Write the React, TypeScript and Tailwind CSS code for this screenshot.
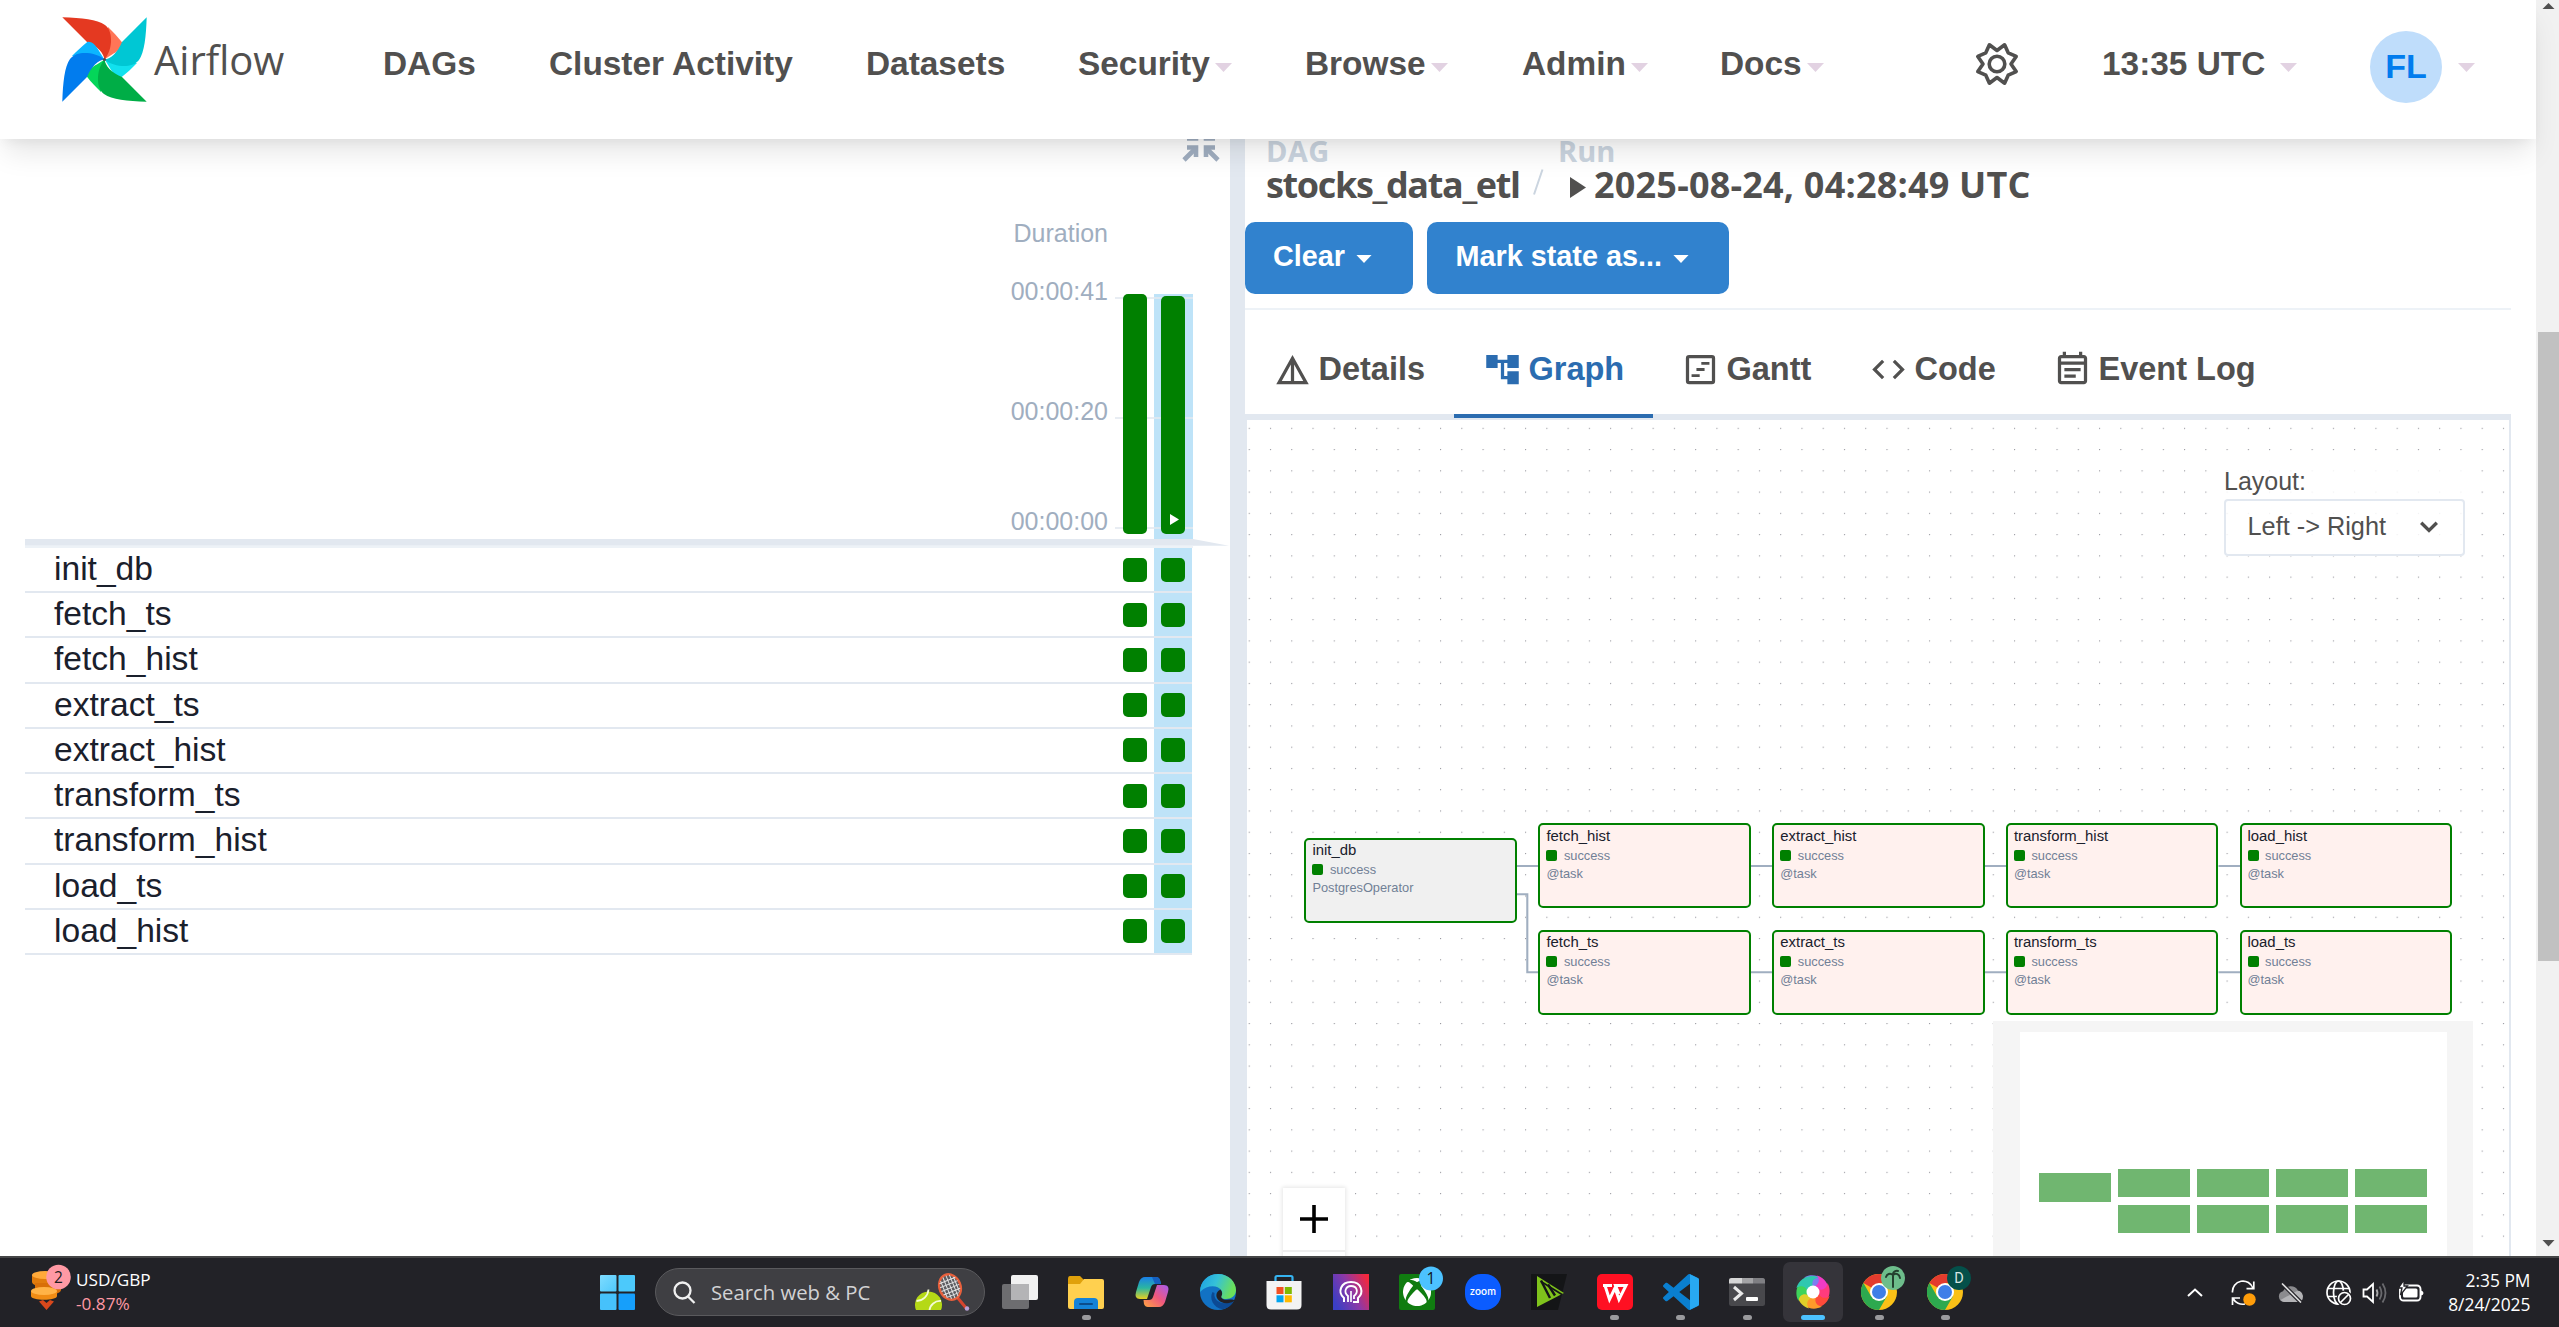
import React from "react";
import {
  MdAccountTree,
  MdCode,
  MdDetails,
  MdOutlineEventNote,
} from "react-icons/md";
import { FaXbox } from "react-icons/fa";

/* ---------- header ---------- */

const NAV_ITEMS = [
  { label: "DAGs", slot: "w-[166px]", caret: false },
  { label: "Cluster Activity", slot: "w-[317px]", caret: false },
  { label: "Datasets", slot: "w-[212px]", caret: false },
  { label: "Security", slot: "w-[227px]", caret: true },
  { label: "Browse", slot: "w-[217px]", caret: true },
  { label: "Admin", slot: "w-[198px]", caret: true },
  { label: "Docs", slot: "w-[255px]", caret: true },
];

function Caret({ className }: { className: string }) {
  return (
    <svg viewBox="0 0 17 9" className={className}>
      <path d="M0 0H17L8.5 9Z" fill="currentColor" />
    </svg>
  );
}

function PinwheelLogo() {
  const blades = [
    { angle: 0, main: "#e43921", light: "#ff7557" },
    { angle: 90, main: "#00c7d4", light: "#11e1ee" },
    { angle: 180, main: "#00ad46", light: "#04d659" },
    { angle: 270, main: "#017cee", light: "#0cb6ff" },
  ];
  return (
    <svg viewBox="0 0 85 85" className="size-[85px] shrink-0">
      {blades.map((b) => (
        <g key={b.angle} transform={`rotate(${b.angle} 42.5 42.5)`}>
          <path d="M46 10C51 15 56 20 60 25.3C61.5 33 50 37 42.5 42.5Z" fill={b.light} />
          <path d="M0.3 0.3C20 1 35 2.5 43 8C48 12 49.3 18 49 25C48.4 33 46 38 42.5 42.5C41.5 36 36 29.5 25 25Z" fill={b.main} />
        </g>
      ))}
      <circle cx="42.5" cy="42.5" r="1.6" fill="#51504f" />
    </svg>
  );
}

function GearIcon() {
  return (
    <svg viewBox="-22 -22 44 44" className="size-[44px]" fill="none" stroke="#51504f" strokeWidth="3.6" strokeLinejoin="round">
      <path d="M0 -13.5L7.6 -19.2L11.2 -11.2L19.2 -7.6L14 0L19.2 7.6L11.2 11.2L7.6 19.2L0 13.5L-7.6 19.2L-11.2 11.2L-19.2 7.6L-14 0L-19.2 -7.6L-11.2 -11.2L-7.6 -19.2Z" />
      <circle r="7.8" />
    </svg>
  );
}

function Header() {
  return (
    <header className="relative z-10 flex h-[139px] items-start bg-white shadow-[0_18px_27px_-5px_rgba(0,0,0,0.1),0_7px_11px_-4px_rgba(0,0,0,0.05)]">
      <div className="flex h-[119px] w-[383px] items-center pl-[61.5px]">
        <PinwheelLogo />
        <span className="ml-[7.5px] font-['Open_Sans',sans-serif] text-[40px] leading-[48px] text-[#51504f]">Airflow</span>
      </div>
      <nav className="flex h-[127px] items-center text-[33.4px] leading-[40px] font-bold text-[#51504f]">
        {NAV_ITEMS.map((item) => (
          <div key={item.label} className={`flex items-center ${item.slot}`}>
            {item.label}
            {item.caret && <Caret className="mt-[7px] ml-[5px] h-[9px] w-[17px] text-[#e2d2e2]" />}
          </div>
        ))}
        <div className="w-[127px]">
          <GearIcon />
        </div>
        <div className="flex w-[268px] items-center">
          13:35 UTC
          <Caret className="mt-[7px] ml-[15px] h-[9px] w-[17px] text-[#e2d2e2]" />
        </div>
      </nav>
      <div className="flex h-[134px] items-center">
        <div className="flex size-[72px] items-center justify-center rounded-full bg-[#bfddfb] pb-[3px] text-[34px] leading-[40px] font-bold text-[#017cee]">
          FL
        </div>
        <Caret className="mt-[1px] ml-[16px] h-[9px] w-[17px] text-[#e2d2e2]" />
      </div>
    </header>
  );
}

/* ---------- grid view ---------- */

const TASKS = [
  "init_db",
  "fetch_ts",
  "fetch_hist",
  "extract_ts",
  "extract_hist",
  "transform_ts",
  "transform_hist",
  "load_ts",
  "load_hist",
];

function CollapseIcon() {
  return (
    <svg viewBox="0 0 38 38" className="h-[38px] w-[38px]" fill="none" stroke="#a0aec0" strokeWidth="4.6">
      <path d="M5 14.5H14V5M5 23.5H14V33M33 14.5H24V5M33 23.5H24V33" />
      <path d="M2 36L13.5 24.5M36 36L24.5 24.5M2 2L13.5 13.5M36 2L24.5 13.5" />
    </svg>
  );
}

function DurationChart() {
  return (
    <div className="relative flex h-[400px] pl-[985px]">
      <div className="flex w-[98px] flex-col items-end pt-[79px] text-[25px] leading-[30px] text-[#a0aec0]">
        <span>Duration</span>
        <span className="mt-[28px]">00:00:41</span>
        <span className="mt-[90px]">00:00:20</span>
        <span className="mt-[80px]">00:00:00</span>
      </div>
      <div className="ml-[7px] flex w-[39px] pt-[155px] pl-[8px]">
        <div className="relative z-[1] h-[240px] w-[24px] rounded-[5px] bg-[#008000]" />
      </div>
      <div className="mt-[155px] flex w-[39px] bg-[#bee3f8] pt-[2px] pl-[7px]">
        <div className="relative z-[1] flex h-[238px] w-[24px] items-end justify-center rounded-[5px] bg-[#008000] pb-[9px]">
          <svg viewBox="0 0 9 11" className="ml-[3px] h-[11px] w-[9px]">
            <path d="M0 0L9 5.5L0 11Z" fill="#fff" />
          </svg>
        </div>
      </div>
      <div className="absolute top-[158px] left-[1090px] h-[2px] w-[78px] bg-[#e2e8f0]/80" />
      <div className="absolute top-[278px] left-[1090px] h-[2px] w-[78px] bg-[#e2e8f0]/80" />
      <div className="absolute top-[388px] left-[1090px] h-[2px] w-[78px] bg-[#e2e8f0]/80" />
      <div className="absolute top-[-15px] left-[1157px]">
        <CollapseIcon />
      </div>
    </div>
  );
}

function GridPanel() {
  return (
    <section className="w-[1230px] shrink-0 pl-[25px]">
      <DurationChart />
      <svg viewBox="0 0 1205 9" className="block h-[9px] w-[1205px]">
        <path d="M0 0H1168L1204 6.8H0Z" fill="#e2e8f0" />
        <path d="M0 6.8H1168V9H0Z" fill="#edf2f7" />
      </svg>
      <ul className="w-[1167px]">
        {TASKS.map((task) => (
          <li key={task} className="flex h-[45.22px] border-b-2 border-[#e2e8f0] text-[#1a202c]">
            <span className="w-[1090px] pl-[29px] text-[33.6px] leading-[42.6px]">{task}</span>
            <span className="flex w-[39px] items-center justify-center">
              <span className="size-[24px] rounded-[5px] bg-[#008000]" />
            </span>
            <span className="flex w-[38px] items-center justify-center bg-[#bee3f8]">
              <span className="size-[24px] rounded-[5px] bg-[#008000]" />
            </span>
          </li>
        ))}
      </ul>
    </section>
  );
}

/* ---------- details panel ---------- */

function Breadcrumb() {
  return (
    <div className="flex h-[83px] pl-[21px] font-['Open_Sans',sans-serif] font-bold text-[#51504f]">
      <div className="w-[266px]">
        <div className="mt-[-6px] h-[37px] text-[29px] leading-[36px] tracking-[0.4px] text-[#cbd5e0]">DAG</div>
        <div className="text-[36px] leading-[30px] tracking-[-1.35px]">stocks_data_etl</div>
      </div>
      <div className="w-[24px] pt-[30px]">
        <svg viewBox="0 0 12 26" className="h-[26px] w-[12px]">
          <path d="M10.5 0.5L2 25.5" stroke="#cbd5e0" strokeWidth="2" />
        </svg>
      </div>
      <div>
        <div className="mt-[-6px] h-[37px] pl-[2px] text-[29px] leading-[36px] text-[#cbd5e0]">Run</div>
        <div className="flex items-center pl-[14px] text-[36px] leading-[30px] tracking-[0.2px]">
          <svg viewBox="0 0 16 21" className="mt-[4px] mr-[8px] h-[21px] w-[16px]">
            <path d="M0 0L16 10.5L0 21Z" fill="#51504f" />
          </svg>
          2025-08-24, 04:28:49 UTC
        </div>
      </div>
    </div>
  );
}

function ActionButton({ label, className }: { label: string; className: string }) {
  return (
    <button className={`flex h-[72px] items-center rounded-[10px] bg-[#3182ce] pb-[4px] text-[28.8px] leading-[36px] font-bold text-white ${className}`}>
      {label}
      <Caret className="mt-[6px] ml-[11px] h-[8px] w-[16px] text-white" />
    </button>
  );
}

function GanttIcon() {
  return (
    <svg viewBox="0 0 24 24" className="size-[39px]" fill="none" stroke="currentColor" strokeWidth="2">
      <rect x="4" y="4" width="16" height="16" rx="1" />
      <path d="M12.5 8.2H17.5M9.5 12H14.5M6.5 15.8H11.5" strokeWidth="1.7" />
    </svg>
  );
}

const TABS = [
  { label: "Details", icon: <MdDetails className="size-[39px]" />, style: "w-[209px] pl-[28px] border-[#e2e8f0] text-[#51504f]" },
  { label: "Graph", icon: <MdAccountTree className="size-[39px]" />, style: "w-[199px] pl-[29px] border-[#2b6cb0] text-[#2b6cb0]" },
  { label: "Gantt", icon: <GanttIcon />, style: "w-[187px] pl-[28px] border-[#e2e8f0] text-[#51504f]" },
  { label: "Code", icon: <MdCode className="size-[39px]" />, style: "w-[184px] pl-[29px] border-[#e2e8f0] text-[#51504f]" },
  { label: "Event Log", icon: <MdOutlineEventNote className="size-[39px]" />, style: "w-[260px] pl-[29px] border-[#e2e8f0] text-[#51504f]" },
];

function TabBar() {
  return (
    <div className="flex h-[110px] w-[1266px] border-b-[6px] border-[#e2e8f0]">
      {TABS.map((tab) => (
        <div key={tab.label} className={`flex h-[108px] items-center gap-[6.5px] border-b-4 pt-[14px] text-[32.5px] leading-[40px] font-bold ${tab.style}`}>
          {tab.icon}
          {tab.label}
        </div>
      ))}
    </div>
  );
}

type NodeSpec = { name: string; kind: string; left: string; top: string; fill: string };

const NODES: NodeSpec[] = [
  { name: "init_db", kind: "PostgresOperator", left: "left-[57.4px]", top: "top-[417.6px]", fill: "bg-[#f0f0f0]" },
  { name: "fetch_hist", kind: "@task", left: "left-[291.4px]", top: "top-[403.4px]", fill: "bg-[#fff1ee]" },
  { name: "extract_hist", kind: "@task", left: "left-[525.3px]", top: "top-[403.4px]", fill: "bg-[#fff1ee]" },
  { name: "transform_hist", kind: "@task", left: "left-[758.9px]", top: "top-[403.4px]", fill: "bg-[#fff1ee]" },
  { name: "load_hist", kind: "@task", left: "left-[992.5px]", top: "top-[403.4px]", fill: "bg-[#fff1ee]" },
  { name: "fetch_ts", kind: "@task", left: "left-[291.4px]", top: "top-[509.7px]", fill: "bg-[#fff1ee]" },
  { name: "extract_ts", kind: "@task", left: "left-[525.3px]", top: "top-[509.7px]", fill: "bg-[#fff1ee]" },
  { name: "transform_ts", kind: "@task", left: "left-[758.9px]", top: "top-[509.7px]", fill: "bg-[#fff1ee]" },
  { name: "load_ts", kind: "@task", left: "left-[992.5px]", top: "top-[509.7px]", fill: "bg-[#fff1ee]" },
];

function GraphNode({ node }: { node: NodeSpec }) {
  return (
    <div className={`absolute h-[85px] w-[212.6px] rounded-[5px] border-2 border-[#008000] pt-[2.7px] pl-[6px] ${node.left} ${node.top} ${node.fill}`}>
      <div className="h-[18px] text-[14.9px] leading-[16px] text-[#1a202c]">{node.name}</div>
      <div className="mt-[1px] flex h-[18px] items-center text-[12.8px] leading-[18px] text-[#718096]">
        <span className="mt-[-1px] mr-[6.5px] size-[11px] rounded-[2px] bg-[#008000]" />
        success
      </div>
      <div className="text-[12.8px] leading-[18px] text-[#718096]">{node.kind}</div>
    </div>
  );
}

const MINIMAP_NODES = [
  { x: 19, y: 141, h: 29 },
  { x: 98, y: 137, h: 28 },
  { x: 177, y: 137, h: 28 },
  { x: 256, y: 137, h: 28 },
  { x: 335, y: 137, h: 28 },
  { x: 98, y: 173, h: 28 },
  { x: 177, y: 173, h: 28 },
  { x: 256, y: 173, h: 28 },
  { x: 335, y: 173, h: 28 },
];

function GraphCanvas() {
  return (
    <div className="relative h-[836px] w-[1266px] overflow-hidden border-x-2 border-[#e2e8f0] bg-white">
      <svg className="absolute inset-0 size-full">
        <defs>
          <pattern id="dots" x="1.7" y="7.8" width="21.258" height="21.258" patternUnits="userSpaceOnUse">
            <circle cx="0.6" cy="0.6" r="0.6" fill="#81818a" />
          </pattern>
        </defs>
        <rect width="100%" height="100%" fill="url(#dots)" />
        <g fill="none" stroke="#a0aec0" strokeWidth="2.1">
          <path d="M270 446H292M504 446H526M737.5 446H760M971.5 446H993.5" />
          <path d="M504 552.3H526M737.5 552.3H760M971.5 552.3H993.5" />
          <path d="M270 474.3H280.3V552.3H292" />
        </g>
      </svg>

      {NODES.map((node) => (
        <GraphNode key={node.name} node={node} />
      ))}

      <div className="absolute top-[45px] left-[977px] flex w-[241px] flex-col bg-white/85">
        <span className="mb-[2px] text-[25px] leading-[32px] text-[#51504f]">Layout:</span>
        <div className="flex h-[57px] items-center justify-between rounded-[4px] border-2 border-[#e2e8f0] pr-[25px] pb-[3px] pl-[21.5px] text-[25.3px] leading-[32px] text-[#51504f]">
          Left -&gt; Right
          <svg viewBox="0 0 18 12" className="mt-[1px] h-[12px] w-[18px]" fill="none" stroke="#51504f" strokeWidth="3.4">
            <path d="M1.2 1.8L9 9.4L16.8 1.8" />
          </svg>
        </div>
      </div>

      <div className="absolute top-[601px] left-[746px] h-[235px] w-[480px] bg-[#f5f5f5] pt-[11px] pl-[26.5px]">
        <svg viewBox="0 0 427 224" className="block h-[224px] w-[427px] bg-white">
          {MINIMAP_NODES.map((r) => (
            <rect key={`${r.x}-${r.y}`} x={r.x} y={r.y} width="72" height={r.h} fill="#70b670" />
          ))}
        </svg>
      </div>

      <div className="absolute top-[768px] left-[35.5px] w-[62px] shadow-[0_0_4px_1px_rgba(0,0,0,0.1)]">
        <div className="flex h-[64px] items-center justify-center border-b-2 border-[#eeeeee] bg-white">
          <svg viewBox="0 0 30 30" className="mt-[-1px] size-[30px]">
            <path d="M15 1V29M1 15H29" stroke="#000" strokeWidth="3.6" />
          </svg>
        </div>
        <div className="h-[64px] bg-white" />
      </div>
    </div>
  );
}

function DetailsPanel() {
  return (
    <section className="flex w-[1306px] flex-col border-l-[15px] border-[#e2e8f0]">
      <Breadcrumb />
      <div className="flex h-[88px] w-[1266px] gap-[14px] border-b-2 border-[#edf2f7]">
        <ActionButton label="Clear" className="w-[168px] pl-[28px]" />
        <ActionButton label="Mark state as..." className="w-[302px] pl-[28.5px]" />
      </div>
      <TabBar />
      <GraphCanvas />
    </section>
  );
}

function Scrollbar() {
  return (
    <div className="flex w-[23px] shrink-0 flex-col items-end bg-[#f1f1f1]">
      <svg viewBox="0 0 23 332" className="block h-[332px] w-[23px]">
        <path d="M12.5 3L18.5 9H6.5Z" fill="#505050" />
      </svg>
      <div className="h-[629px] w-[21px] bg-[#c1c1c1]" />
      <svg viewBox="0 0 23 295" className="block h-[295px] w-[23px]">
        <path d="M6.5 279H18.5L12.5 285.5Z" fill="#505050" />
      </svg>
    </div>
  );
}

/* ---------- taskbar ---------- */

function CoinsWidget() {
  return (
    <svg viewBox="0 0 42 48" className="h-[48px] w-[42px]">
      <g>
        <path d="M2 13V20C2 26 28 26 28 20V13Z" fill="#e07b0c" />
        <ellipse cx="15" cy="13" rx="13" ry="4" fill="#ffa93a" />
        <path d="M5 21V28C5 34 31 34 31 28V21Z" fill="#d86f08" />
        <path d="M1 29V34C1 39 27 39 27 34V29Z" fill="#f08c14" />
        <ellipse cx="14" cy="29" rx="13" ry="4" fill="#ffb347" />
      </g>
      <path d="M9 39.5L13 38L16.500 41L20 38L24 39.500L16.500 48Z" fill="#d8481c" />
      <circle cx="28.500" cy="15" r="12.300" fill="#ff99a4" />
      <text x="28.500" y="20.500" textAnchor="middle" fontSize="15.500" fontFamily="'Open Sans', sans-serif" fill="#1c1c1c">2</text>
    </svg>
  );
}

function WindowsIcon() {
  return (
    <svg viewBox="0 0 35 35" className="size-[35px]">
      <defs>
        <linearGradient id="win" x1="0" y1="0" x2="1" y2="1">
          <stop offset="0" stopColor="#7fdcff" />
          <stop offset="1" stopColor="#4fc8fb" />
        </linearGradient>
      </defs>
      <rect width="16.500" height="16.500" rx="1" fill="url(#win)" />
      <rect x="18.500" width="16.500" height="16.500" rx="1" fill="#4cc9fb" />
      <rect y="18.500" width="16.500" height="16.500" rx="1" fill="#46c1fb" />
      <rect x="18.500" y="18.500" width="16.500" height="16.500" rx="1" fill="#169ffb" />
    </svg>
  );
}

function TennisIcon() {
  return (
    <svg viewBox="0 0 56 38" className="h-[38px] w-[56px]">
      <path d="M43 24L52.500 35.500" stroke="#d8452f" strokeWidth="3" strokeLinecap="round" />
      <circle cx="53" cy="35.500" r="2.200" fill="#b9a0d8" />
      <g transform="rotate(-22 36 14)">
        <ellipse cx="36" cy="14" rx="10.500" ry="13" fill="#5b5b60" stroke="#e8603c" strokeWidth="2.400" />
        <path d="M29.500 5V23M33 2.500V25.500M36.500 2V26M40 2.500V25.500M43 6V22M27.500 7H44.500M26.500 11H45.500M26.500 15H45.500M27 19H45M30 22.500H42" stroke="#e2e2e2" strokeWidth="1" />
      </g>
      <path d="M2 37A13.500 13.500 0 1 1 27 37Z" fill="#b5d916" />
      <path d="M2.500 28C9 28 14 23 14.500 16.500M15.500 37C16 32 21 27.500 27 28" fill="none" stroke="#f4fbd5" strokeWidth="1.800" />
    </svg>
  );
}

function TaskViewIcon() {
  return (
    <svg viewBox="0 0 36 36" className="size-[36px]">
      <rect x="9" y="1" width="27" height="25" rx="2" fill="#f1f1f1" />
      <rect x="0" y="10" width="27" height="25" rx="2" fill="#6d6d70" />
      <rect x="9" y="10" width="18" height="16" fill="#b4b4b6" />
    </svg>
  );
}

function ExplorerIcon() {
  return (
    <svg viewBox="0 0 36 36" className="size-[36px]">
      <path d="M0 5Q0 2 2 2H12L16 6V12H0Z" fill="#e0a10b" />
      <path d="M0 10H12L16 5H34Q36 5 36 7V33Q36 35 34 35H2Q0 35 0 33Z" fill="#ffd04f" />
      <path d="M6 35V28Q6 24 10 24H26Q30 24 30 28V35Z" fill="#1482d8" />
      <rect x="11" y="29" width="14" height="2" rx="1" fill="#0b4c8c" />
    </svg>
  );
}

function CopilotIcon() {
  return (
    <svg viewBox="0 0 36 36" className="size-[36px]">
      <defs>
        <linearGradient id="cpl" x1="0" y1="0" x2="0" y2="1">
          <stop offset="0" stopColor="#1a7fe8" />
          <stop offset="0.500" stopColor="#2bb6a0" />
          <stop offset="1" stopColor="#e8d020" />
        </linearGradient>
        <linearGradient id="cpr" x1="1" y1="0" x2="0" y2="1">
          <stop offset="0" stopColor="#a45cf0" />
          <stop offset="0.500" stopColor="#f0587e" />
          <stop offset="1" stopColor="#ffa640" />
        </linearGradient>
      </defs>
      <path d="M11 3H22Q25 3 26 6L27 10H21Q18 10 17 13L13 25H6Q0 25 2 18L5 8Q7 3 11 3Z" fill="url(#cpl)" />
      <path d="M25 33H14Q11 33 10 30L9.500 26H15Q18 26 19 23L23 11H30Q36 11 34 18L31 28Q29 33 25 33Z" fill="url(#cpr)" />
      <path d="M18 3H22Q25 3 26 6L27 10H21Z" fill="#1560c0" />
    </svg>
  );
}

function EdgeIcon() {
  return (
    <svg viewBox="0 0 36 36" className="size-[36px]">
      <defs>
        <linearGradient id="edgeTop" x1="0" y1="0" x2="1" y2="0.300">
          <stop offset="0" stopColor="#1b9de2" />
          <stop offset="0.500" stopColor="#35c1d8" />
          <stop offset="1" stopColor="#6be05a" />
        </linearGradient>
      </defs>
      <circle cx="18" cy="18" r="18" fill="#1272c4" />
      <path d="M0 18C0 7 8 0 18 0C29 0 36 8 36 16C36 22 31 25 26 25C22 25 20.500 23.500 21 22C22.500 20 22.500 18 21 16C18 11.500 8 10 0 18Z" fill="url(#edgeTop)" />
      <path d="M12.500 18C9 24 13 34 23 35.300C28 34 32 31 34 27C24 32 13 28 14.500 19Z" fill="#0c4a94" />
      <path d="M21.500 22C20.500 24 23 26 27 25.800C30 25.500 33 25 34.500 26.500C30 31 20 30 17 24C15.500 20.500 17 17 20.500 15.500C22.500 18 22.500 20 21.500 22Z" fill="#222126" />
    </svg>
  );
}

function StoreIcon() {
  return (
    <svg viewBox="0 0 36 36" className="size-[36px]">
      <path d="M9.500 9V3.500Q9.500 2 11 2H25Q26.500 2 26.500 3.500V9" fill="none" stroke="#35b3f0" strokeWidth="2.200" />
      <path d="M0.500 7H35.500V31Q35.500 35.500 31 35.500H5Q0.500 35.500 0.500 31Z" fill="#f3f3f3" />
      <rect x="10.500" y="13" width="7" height="7" fill="#f25022" />
      <rect x="18.800" y="13" width="7" height="7" fill="#7fba00" />
      <rect x="10.500" y="21.300" width="7" height="7" fill="#00a4ef" />
      <rect x="18.800" y="21.300" width="7" height="7" fill="#ffb900" />
    </svg>
  );
}

function HeadIcon() {
  return (
    <svg viewBox="0 0 36 36" className="size-[36px]">
      <defs>
        <linearGradient id="head" x1="0" y1="0.700" x2="1" y2="0.200">
          <stop offset="0" stopColor="#3b3fc4" />
          <stop offset="0.500" stopColor="#8c38a8" />
          <stop offset="1" stopColor="#f5283c" />
        </linearGradient>
      </defs>
      <rect width="36" height="36" fill="url(#head)" />
      <path d="M11 28V24C4 18 8 8 18 8C29 8 31 19 25 24V28H20" fill="none" stroke="#fff" strokeWidth="2" />
      <path d="M15 28V22C10 18 13 12 18 12C24 12 26 18 21 22V25" fill="none" stroke="#fff" strokeWidth="1.800" />
      <path d="M18 17V28" stroke="#fff" strokeWidth="1.600" />
    </svg>
  );
}

function XboxIcon() {
  return (
    <svg viewBox="0 0 44 44" className="mt-[-8px] ml-[8px] size-[44px]">
      <rect x="0" y="8" width="36" height="36" rx="2" fill="#107c10" />
      <FaXbox x="3.500" y="11.500" size={29} color="#fff" />
      <circle cx="32" cy="12.500" r="12" fill="#4cc2ff" />
      <text x="32" y="18" textAnchor="middle" fontSize="15.500" fontFamily="'Open Sans', sans-serif" fill="#101418">1</text>
    </svg>
  );
}

function ZoomIcon() {
  return (
    <svg viewBox="0 0 36 36" className="size-[36px]">
      <rect width="36" height="36" rx="16" fill="#0b5cff" />
      <text x="18" y="21" textAnchor="middle" fontSize="10.500" fontWeight="600" fontFamily="Lato, sans-serif" fill="#fff" textLength="26">zoom</text>
    </svg>
  );
}

function GreenPlayIcon() {
  return (
    <svg viewBox="0 0 36 36" className="size-[36px]">
      <path d="M0 0H36L27 36H0Z" fill="#141517" />
      <path d="M6 2L33 19L6 33Z" fill="#7fc31c" />
      <path d="M10 6.500L19 24M17 10.500L24 21.500" stroke="#141517" strokeWidth="2.400" />
      <path d="M10 7.500L31 20.500" stroke="#141517" strokeWidth="1.600" />
    </svg>
  );
}

function WpsIcon() {
  return (
    <svg viewBox="0 0 36 36" className="size-[36px]">
      <rect width="36" height="36" rx="5" fill="#ff1022" />
      <path d="M6 11.500H15M8 11.500L12.500 25.500L18 14L22 25.500L29 11.500H18.500L22 20" fill="none" stroke="#fff" strokeWidth="3" />
    </svg>
  );
}

function VsCodeIcon() {
  return (
    <svg viewBox="0 0 100 100" className="size-[36px]">
      <path
        fillRule="evenodd"
        d="M96.46 10.8L75.86 0.88C73.47 -0.27 70.62 0.21 68.75 2.08L29.35 38.04L12.19 25.01C10.59 23.8 8.36 23.9 6.87 25.25L1.37 30.26C-0.45 31.91 -0.45 34.76 1.36 36.41L16.24 50L1.36 63.58C-0.45 65.23 -0.45 68.09 1.37 69.74L6.87 74.75C8.36 76.1 10.59 76.2 12.19 74.99L29.35 61.96L68.75 97.9C70.62 99.8 73.47 100.27 75.86 99.13L96.47 89.2C98.63 88.17 100 85.98 100 83.59V16.41C100 14.02 98.62 11.83 96.46 10.8ZM75.02 72.7L45.11 50L75.02 27.3Z"
        fill="#0a7fd0"
      />
      <path d="M75.02 1L96.46 10.8C98.62 11.83 100 14.02 100 16.41V83.59C100 85.98 98.63 88.17 96.47 89.2L75.02 99Z" fill="#28a9f2" />
    </svg>
  );
}

function TerminalIcon() {
  return (
    <svg viewBox="0 0 36 36" className="size-[36px]">
      <rect y="4" width="36" height="28" rx="2.500" fill="#48484c" />
      <path d="M0 9.500V6Q0 4 2.500 4H13V9.500Z" fill="#d6d6d6" />
      <path d="M13 4H24V9.500H13Z" fill="#a4a4a6" />
      <path d="M24 4H33.500Q36 4 36 6.500V9.500H24Z" fill="#7f7f83" />
      <path d="M5 13L12.500 19.500L5 26" fill="none" stroke="#e9e9e9" strokeWidth="3" />
      <rect x="17" y="23" width="12" height="4" rx="1" fill="#fff" />
    </svg>
  );
}

function SwirlIcon() {
  const petals = ["#7f7cf0", "#f03bc4", "#ff3b7c", "#ff4a3a", "#ff9a2a", "#e0d02a", "#3fd45a", "#2fc8b0"];
  return (
    <svg viewBox="-18 -18 36 36" className="size-[36px]">
      <circle r="13" fill="#ffffff" opacity="0.25" />
      {petals.map((color, i) => (
        <path key={color} d="M-3 -5C-1 -10 -4 -14 -9 -14.500C1 -20 12 -14 14 -6C11 -9 6 -9 4 -4Z" fill={color} transform={`rotate(${i * 45})`} />
      ))}
      <circle r="6.500" fill="#fff" />
    </svg>
  );
}

function ChromeIcon({ badge, badgeColor }: { badge: React.ReactNode; badgeColor: string }) {
  return (
    <svg viewBox="0 0 44 44" className="mt-[-8px] ml-[8px] size-[44px]">
      <g transform="translate(18 26)">
        <circle r="18" fill="#fbc117" />
        <path d="M0 0L-15.600 -9A18 18 0 0 1 15.600 -9H0Z" fill="#e33b2e" />
        <path d="M-15.600 -9A18 18 0 0 0 0 18L7.800 4.500L-7.800 4.500Z" fill="#2da94f" />
        <circle r="9" fill="#fff" />
        <circle r="7" fill="#3f7ee8" />
      </g>
      <circle cx="32" cy="12" r="12" fill={badgeColor} />
      {badge}
    </svg>
  );
}

const APPS = [
  { id: "taskview", icon: <TaskViewIcon />, mark: "" },
  { id: "explorer", icon: <ExplorerIcon />, mark: "dot" },
  { id: "copilot", icon: <CopilotIcon />, mark: "" },
  { id: "edge", icon: <EdgeIcon />, mark: "" },
  { id: "store", icon: <StoreIcon />, mark: "" },
  { id: "head", icon: <HeadIcon />, mark: "" },
  { id: "xbox", icon: <XboxIcon />, mark: "" },
  { id: "zoom", icon: <ZoomIcon />, mark: "" },
  { id: "play", icon: <GreenPlayIcon />, mark: "" },
  { id: "wps", icon: <WpsIcon />, mark: "dot" },
  { id: "vscode", icon: <VsCodeIcon />, mark: "dot" },
  { id: "terminal", icon: <TerminalIcon />, mark: "dot" },
  { id: "swirl", icon: <SwirlIcon />, mark: "active" },
  {
    id: "chrome-1",
    icon: (
      <ChromeIcon
        badgeColor="#6dbd8b"
        badge={
          <g fill="none" stroke="#24402f" strokeWidth="2" strokeLinecap="round">
            <path d="M32 21V10M32 9C29 6.500 26 8 25 11M32 9C35 6.500 38.500 8 39 12M32 8C32 5.500 35 4.500 37 5" />
          </g>
        }
      />
    ),
    mark: "dot",
  },
  {
    id: "chrome-2",
    icon: (
      <ChromeIcon
        badgeColor="#04504a"
        badge={
          <text x="32" y="17" textAnchor="middle" fontSize="14.500" fontFamily="Roboto, sans-serif" fill="#d7e6e4">
            D
          </text>
        }
      />
    ),
    mark: "dot",
  },
];

function AppSlot({ icon, mark }: { icon: React.ReactNode; mark: string }) {
  return (
    <div className="flex h-[69px] w-[66.1px] flex-col items-center pt-[4px]">
      <div className={`flex h-[60px] w-[60px] flex-col items-center rounded-[7px] pt-[12px] ${mark === "active" ? "bg-[#35343a]" : ""}`}>
        <div className="flex h-[36px] items-center">{icon}</div>
        {mark === "dot" && <span className="mt-[5px] h-[5px] w-[9px] rounded-full bg-[#9a9a9d]" />}
        {mark === "active" && <span className="mt-[5px] h-[5px] w-[24px] rounded-full bg-[#4cc2ff]" />}
      </div>
    </div>
  );
}

function Tray() {
  return (
    <div className="flex h-[69px] w-[372px] items-center text-white">
      <svg viewBox="0 0 16 9" className="h-[9px] w-[16px]" fill="none" stroke="#fff" strokeWidth="2">
        <path d="M1 8L8 1.500L15 8" />
      </svg>
      <svg viewBox="0 0 25 26" className="ml-[28px] h-[26px] w-[25px]" fill="none" stroke="#fff" strokeWidth="1.700">
        <path d="M1.500 12.500A10.500 10.500 0 0 1 22 8.500M22.800 1.500V8.700H15.500M1.500 25V18H9M2 18.500A11 11 0 0 0 14 24" />
        <circle cx="18.500" cy="19.500" r="6.200" fill="#ff9d0a" stroke="none" />
      </svg>
      <svg viewBox="0 0 26 20" className="ml-[22px] h-[20px] w-[26px]">
        <path d="M6 19A5.500 5.500 0 0 1 5 8.200A8.500 8.500 0 0 1 20 7.500A6 6 0 0 1 20 19Z" fill="#8b8b8e" />
        <path d="M6 19A5.500 5.500 0 0 1 2.500 17L17 9Q23 6 25 13Q25 19 20 19Z" fill="#b3b3b6" />
        <path d="M4 0.500L23 19.500" stroke="#222126" strokeWidth="4" />
        <path d="M4 0.500L23 19.500" stroke="#dededf" strokeWidth="1.600" />
      </svg>
      <svg viewBox="0 0 26 26" className="ml-[22px] h-[26px] w-[26px]" fill="none" stroke="#fff" strokeWidth="1.700">
        <circle cx="12.500" cy="12.500" r="11.500" />
        <ellipse cx="12.500" cy="12.500" rx="5" ry="11.500" />
        <path d="M2 8.500H23M2 16.500H23" />
        <circle cx="18.500" cy="18.500" r="8" fill="#222126" stroke="none" />
        <circle cx="18.500" cy="18.500" r="6" />
        <path d="M14.500 22.500L22.500 14.500" />
      </svg>
      <svg viewBox="0 0 26 24" className="ml-[10px] h-[24px] w-[26px]" fill="none" strokeWidth="1.800">
        <path d="M1.500 8.500H5L11 3V21L5 15.500H1.500Z" stroke="#fff" />
        <path d="M14.500 8.500Q16.500 12 14.500 15.500" stroke="#a8a8aa" />
        <path d="M17.500 5.500Q21.500 12 17.500 18.500M20.500 2.500Q26.500 12 20.500 21.500" stroke="#6a6a6e" />
      </svg>
      <svg viewBox="0 0 26 22" className="mt-[-3px] ml-[10px] h-[22px] w-[26px]">
        <rect x="2" y="5.500" width="20.500" height="15" rx="3.500" fill="none" stroke="#fff" strokeWidth="1.900" />
        <rect x="5" y="8.500" width="14.500" height="9" rx="1.500" fill="#fff" />
        <path d="M23 10.500Q25.500 11 25.500 13Q25.500 15 23 15.500Z" fill="#fff" />
        <path d="M6 0L0.500 8H4L2.500 15L9.500 6H6Z" fill="#fff" stroke="#222126" strokeWidth="1.300" />
      </svg>
      <div className="ml-auto pr-[28.5px] pb-[1px] text-right font-['Open_Sans',sans-serif] text-[17.4px] leading-[24px]">
        <div>2:35 PM</div>
        <div>8/24/2025</div>
      </div>
    </div>
  );
}

function Taskbar() {
  return (
    <footer className="flex h-[71px] shrink-0 items-start border-t-2 border-[#454647] bg-[#222227]">
      <div className="flex w-[600px] pl-[30px] font-['Open_Sans',sans-serif] text-[17.2px] leading-[24px]">
        <div className="pt-[4px]">
          <CoinsWidget />
        </div>
        <div className="ml-[4px] pt-[10px]">
          <div className="text-white">USD/GBP</div>
          <div className="text-[#ff99a4]">-0.87%</div>
        </div>
      </div>
      <div className="pt-[17px]">
        <WindowsIcon />
      </div>
      <div className="mt-[10px] ml-[20px] flex h-[48px] w-[330px] items-center rounded-full border border-[#5a5a5d] bg-[#3f3f43] pl-[17px]">
        <svg viewBox="0 0 23 23" className="h-[23px] w-[23px]" fill="none" stroke="#f0f0f0" strokeWidth="2.300">
          <circle cx="9.500" cy="9.500" r="8" />
          <path d="M15 15.500L21.500 22" />
        </svg>
        <span className="ml-[15px] pb-[1px] font-['Open_Sans',sans-serif] text-[20.3px] leading-[28px] text-[#d2d2d4]">Search web &amp; PC</span>
        <span className="ml-[44px]">
          <TennisIcon />
        </span>
      </div>
      <div className="ml-[2px] flex">
        {APPS.map((app) => (
          <AppSlot key={app.id} icon={app.icon} mark={app.mark} />
        ))}
      </div>
      <div className="ml-auto">
        <Tray />
      </div>
    </footer>
  );
}

export default function App() {
  return (
    <div className="flex h-[1327px] w-[2559px] flex-col overflow-hidden bg-white font-['Liberation_Sans',Arial,sans-serif]">
      <div className="flex h-[1256px]">
        <div className="flex w-[2536px] flex-col">
          <Header />
          <main className="flex h-[1117px]">
            <GridPanel />
            <DetailsPanel />
          </main>
        </div>
        <Scrollbar />
      </div>
      <Taskbar />
    </div>
  );
}
